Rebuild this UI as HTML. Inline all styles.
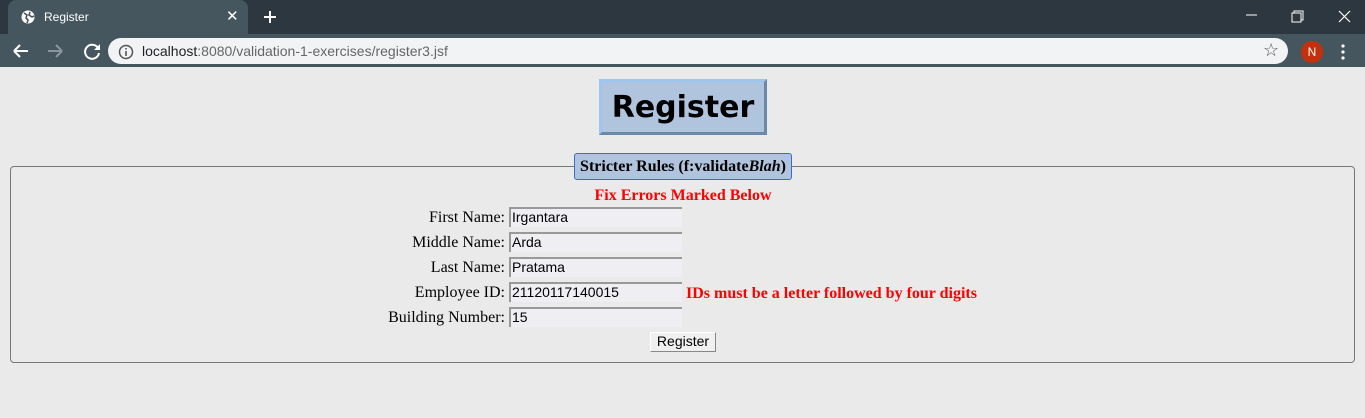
<!DOCTYPE html>
<html><head><style>
*{box-sizing:border-box}
body{margin:0;width:1365px;height:418px;background:#eaeaea;font-family:"Liberation Serif",serif;position:relative;overflow:hidden}
.ab{position:absolute}
.top{left:0;top:0;width:1365px;height:34px;background:#2d373f}
.tab{left:8px;top:0;width:240px;height:34px;background:#46565f;border-radius:8px 8px 0 0}
.bar{left:0;top:34px;width:1365px;height:33px;background:#46565f}
.omni{left:108px;top:38px;width:1180px;height:26px;background:#f1f3f4;border-radius:13px}
.sans{font-family:"Liberation Sans",sans-serif}
.h1{left:599px;top:79px;width:168px;height:56px;background:#b0c4de;border:3px solid;border-color:#9cc6f0 #6a88a8 #6a88a8 #9cc6f0;font:bold 30px "DejaVu Sans","Liberation Sans",sans-serif;text-align:center;line-height:52px}
.fs{left:10px;top:166px;width:1345px;height:197px;border:1px solid #777;border-radius:4px}
.lg{left:574px;top:153px;width:218px;height:27px;background:#b0c4de;border:1px solid #3a6ccf;border-radius:3px;font:bold 16px "Liberation Serif",serif;text-align:center;line-height:26px}
.red{color:#f00;font-weight:bold;font-size:16px}
.lbl{width:505px;left:0;text-align:right;font-size:16px;line-height:22px}
.in{left:509px;width:173px;height:20px;background:#eeeef3;border-top:2px solid #999;border-left:2px solid #999;font:14px "Liberation Sans",sans-serif;padding-left:1px;line-height:16px}
.btn{left:650px;top:332px;width:66px;height:20px;background:#f0f0f0;border:1px solid;border-color:#fff #888 #888 #fff;font:14px "Liberation Sans",sans-serif;text-align:center;line-height:17px}
</style></head><body>
<div class="ab top"></div>
<div class="ab tab"></div>
<svg class="ab" style="left:21px;top:10px" width="14" height="14" viewBox="0 0 14 14"><circle cx="7" cy="7" r="6.5" fill="#fff"/><path d="M3 3 L6 5 L5 8 L7 10 L6 13 M9 2 L8 5 L11 7 L13 6" stroke="#46565f" stroke-width="1.6" fill="none"/></svg>
<div class="ab sans" style="left:44px;top:10px;color:#fff;font-size:12px">Register</div>
<div class="ab sans" style="left:226px;top:7px;color:#fff;font-size:15px">✕</div>
<svg class="ab" style="left:263px;top:10px" width="14" height="14"><path d="M7 1V13M1 7H13" stroke="#fff" stroke-width="2"/></svg>
<svg class="ab" style="left:1246px;top:10px" width="110" height="14"><path d="M0 5H11" stroke="#fff"/><path d="M46 3H55V12H46ZM48 3V1H57V10H55" stroke="#fff" fill="none"/><path d="M93 1L104 12M104 1L93 12" stroke="#fff" stroke-width="1.2"/></svg>
<div class="ab bar"></div>
<svg class="ab" style="left:12px;top:42px" width="90" height="18"><path d="M2 9H16M2 9L8 3M2 9L8 15" stroke="#fff" stroke-width="2" fill="none"/><path d="M50 9H36M50 9L44 3M50 9L44 15" stroke="#8a969c" stroke-width="2" fill="none"/><path d="M86 6A7 7 0 1 0 87 11" stroke="#fff" stroke-width="2" fill="none"/><path d="M88 2V8H82Z" fill="#fff"/></svg>
<div class="ab omni"></div>
<svg class="ab" style="left:118px;top:44px" width="16" height="16"><circle cx="8" cy="8" r="6.5" stroke="#555" stroke-width="1.5" fill="none"/><path d="M8 7V12M8 4V5.5" stroke="#555" stroke-width="1.6"/></svg>
<div class="ab sans" style="left:142px;top:43px;font-size:14px;color:#202124">localhost<span style="color:#666">:8080/validation-1-exercises/register3.jsf</span></div>
<div class="ab" style="left:1263px;top:40px;font-size:18px;color:#555">☆</div>
<div class="ab sans" style="left:1301px;top:41px;width:22px;height:22px;border-radius:11px;background:#c5300c;color:#fff;font-size:12px;text-align:center;line-height:22px">N</div>
<svg class="ab" style="left:1341px;top:44px" width="4" height="16"><circle cx="2" cy="2" r="1.6" fill="#fff"/><circle cx="2" cy="8" r="1.6" fill="#fff"/><circle cx="2" cy="14" r="1.6" fill="#fff"/></svg>

<div class="ab h1">Register</div>
<div class="ab fs"></div>
<div class="ab lg">Stricter Rules (f:validate<i>Blah</i>)</div>
<div class="ab red" style="left:0;width:1366px;text-align:center;top:187px">Fix Errors Marked Below</div>
<div class="ab lbl" style="top:207px">First Name:</div><div class="ab in" style="top:207px">Irgantara</div>
<div class="ab lbl" style="top:232px">Middle Name:</div><div class="ab in" style="top:232px">Arda</div>
<div class="ab lbl" style="top:257px">Last Name:</div><div class="ab in" style="top:257px">Pratama</div>
<div class="ab lbl" style="top:282px">Employee ID:</div><div class="ab in" style="top:282px">21120117140015</div>
<div class="ab red" style="left:686px;top:285px">IDs must be a letter followed by four digits</div>
<div class="ab lbl" style="top:307px">Building Number:</div><div class="ab in" style="top:307px">15</div>
<div class="ab btn">Register</div>
</body></html>
